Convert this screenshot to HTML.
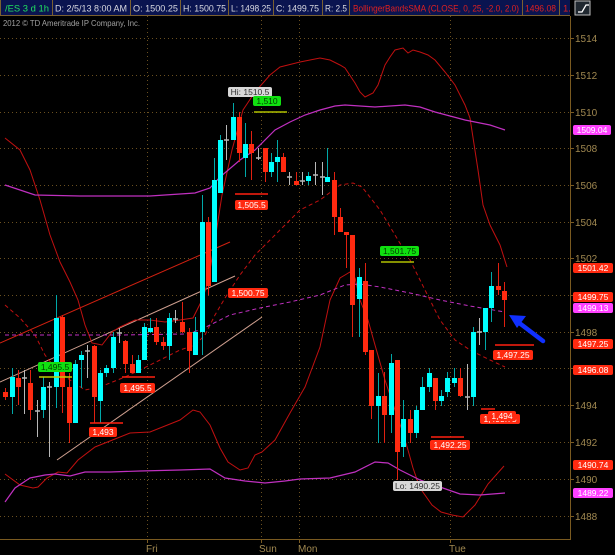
<!DOCTYPE html>
<html><head><meta charset="utf-8"><style>
html,body{margin:0;padding:0;background:#000;width:615px;height:555px;overflow:hidden}
svg{display:block}
text{font-family:"Liberation Sans",sans-serif}
</style></head><body>
<svg width="615" height="555" viewBox="0 0 615 555" xmlns="http://www.w3.org/2000/svg">
<rect width="615" height="555" fill="#000"/>
<!-- header -->
<rect x="0" y="0" width="570" height="16" fill="#0a1450"/>
<g stroke="#7a6030" stroke-width="1">
<line x1="0.5" y1="0" x2="0.5" y2="16"/>
<line x1="52.5" y1="0" x2="52.5" y2="16"/><line x1="130.5" y1="0" x2="130.5" y2="16"/>
<line x1="180.5" y1="0" x2="180.5" y2="16"/><line x1="228.5" y1="0" x2="228.5" y2="16"/>
<line x1="273.5" y1="0" x2="273.5" y2="16"/><line x1="322.5" y1="0" x2="322.5" y2="16"/>
<line x1="349.5" y1="0" x2="349.5" y2="16"/><line x1="522.5" y1="0" x2="522.5" y2="16"/><line x1="559.5" y1="0" x2="559.5" y2="16"/>
<line x1="0" y1="15.5" x2="570" y2="15.5"/>
</g>
<g font-size="9.5" fill="#d8d8e0">
<text x="5" y="11.5" fill="#20e060" textLength="44" lengthAdjust="spacingAndGlyphs">/ES 3 d 1h</text>
<text x="55" y="11.5" textLength="72" lengthAdjust="spacingAndGlyphs">D: 2/5/13 8:00 AM</text>
<text x="133" y="11.5" textLength="45" lengthAdjust="spacingAndGlyphs">O: 1500.25</text>
<text x="183" y="11.5" textLength="43" lengthAdjust="spacingAndGlyphs">H: 1500.75</text>
<text x="231" y="11.5" textLength="40" lengthAdjust="spacingAndGlyphs">L: 1498.25</text>
<text x="276" y="11.5" textLength="43" lengthAdjust="spacingAndGlyphs">C: 1499.75</text>
<text x="325" y="11.5" textLength="22" lengthAdjust="spacingAndGlyphs">R: 2.5</text>
<text x="353" y="11.5" fill="#e02020" textLength="166" lengthAdjust="spacingAndGlyphs">BollingerBandsSMA (CLOSE, 0, 25, -2.0, 2.0)</text>
<text x="525" y="11.5" fill="#e02020" textLength="31" lengthAdjust="spacingAndGlyphs">1496.08</text>
<text x="563" y="11.5" fill="#e02020">1.</text>
</g>
<rect x="575" y="1" width="15" height="14" fill="#202830" stroke="#c0c0c0"/>
<path d="M578 12 L582 12 L586 5 L589 5" stroke="#fff" stroke-width="1.3" fill="none"/>
<text x="3" y="26" font-size="8.5" fill="#a0a0a0" textLength="137" lengthAdjust="spacingAndGlyphs">2012 © TD Ameritrade IP Company, Inc.</text>
<!-- grid -->
<g stroke="#6a5020" stroke-width="1" stroke-dasharray="1,3">
<line x1="0" y1="38.5" x2="570" y2="38.5"/><line x1="0" y1="75.5" x2="570" y2="75.5"/>
<line x1="0" y1="112.5" x2="570" y2="112.5"/><line x1="0" y1="148.5" x2="570" y2="148.5"/>
<line x1="0" y1="185.5" x2="570" y2="185.5"/><line x1="0" y1="222.5" x2="570" y2="222.5"/>
<line x1="0" y1="258.5" x2="570" y2="258.5"/><line x1="0" y1="295.5" x2="570" y2="295.5"/>
<line x1="0" y1="332.5" x2="570" y2="332.5"/><line x1="0" y1="368.5" x2="570" y2="368.5"/>
<line x1="0" y1="405.5" x2="570" y2="405.5"/><line x1="0" y1="442.5" x2="570" y2="442.5"/>
<line x1="0" y1="479.5" x2="570" y2="479.5"/><line x1="0" y1="516.5" x2="570" y2="516.5"/>
<line x1="147.5" y1="16" x2="147.5" y2="539"/><line x1="261.5" y1="16" x2="261.5" y2="539"/>
<line x1="299.5" y1="16" x2="299.5" y2="539"/><line x1="450.5" y1="16" x2="450.5" y2="539"/>
</g>
<g stroke="#7a5a20"><line x1="570.5" y1="16" x2="570.5" y2="540"/><line x1="0" y1="539.5" x2="571" y2="539.5"/>
<line x1="147.5" y1="539" x2="147.5" y2="543"/><line x1="261.5" y1="539" x2="261.5" y2="543"/><line x1="299.5" y1="539" x2="299.5" y2="543"/><line x1="450.5" y1="539" x2="450.5" y2="543"/>
<path d="M570 38.5h4M570 75.5h4M570 112.5h4M570 148.5h4M570 185.5h4M570 222.5h4M570 258.5h4M570 295.5h4M570 332.5h4M570 368.5h4M570 405.5h4M570 442.5h4M570 479.5h4M570 516.5h4"/></g>
<g font-size="10" fill="#a08850">
<text x="575" y="42">1514</text><text x="575" y="79">1512</text><text x="575" y="116">1510</text>
<text x="575" y="152">1508</text><text x="575" y="189">1506</text><text x="575" y="226">1504</text>
<text x="575" y="262">1502</text><text x="575" y="299">1500</text><text x="575" y="336">1498</text>
<text x="575" y="372">1496</text><text x="575" y="409">1494</text><text x="575" y="446">1492</text>
<text x="575" y="483">1490</text><text x="575" y="520">1488</text>
<text x="146" y="552">Fri</text><text x="259" y="552">Sun</text><text x="298" y="552">Mon</text><text x="449" y="552">Tue</text>
</g>
<!-- trend lines -->
<line x1="0" y1="343" x2="230" y2="242" stroke="#d02010" stroke-width="1"/>
<line x1="0" y1="382" x2="235" y2="276" stroke="#d0a090" stroke-width="1"/>
<line x1="57" y1="460" x2="262" y2="317" stroke="#d0a090" stroke-width="1"/>
<!-- bands -->
<polyline fill="none" stroke="#c01010" stroke-width="1" points="5,138 20,150 30,170 40,200 50,235 60,262 70,282 78,300 85,325 92,343 102,345 112,332 120,327 135,320 150,320 165,322 180,320 193,318 202,300 208,282 215,240 222,195 232,150 243,110 255,92 270,75 280,67 300,62 320,58 330,60 340,65 345,68 355,83 360,92 365,97 373,93 378,85 385,65 390,57 395,50 403,48 408,53 413,50 420,52 428,55 435,60 445,72 455,85 465,105 470,118 478,170 483,205 490,225 500,245 507,267"/>
<polyline fill="none" stroke="#c01010" stroke-width="1" points="5,474 20,485 33,488 38,487 47,478 58,472 67,473 78,460 95,447 130,433 150,432 180,420 193,410 200,412 210,425 220,448 228,462 240,470 248,468 255,455 262,452 275,440 290,413 305,387 320,347 330,300 340,278 345,275 350,272 355,278 360,300 368,320 375,345 385,380 395,410 402,430 408,450 413,468 420,488 432,505 441,512 452,515 463,517 475,505 488,484 504,466"/>
<polyline fill="none" stroke="#c01010" stroke-width="1" stroke-dasharray="4,3" points="5,305 20,318 35,335 45,355 55,368 70,380 85,390 100,387 115,381 125,377 140,370 160,360 180,350 195,345 205,335 215,315 225,298 240,275 255,255 270,240 285,225 300,210 320,200 340,185 353,183 362,187 380,210 395,235 410,260 425,290 440,320 455,340 470,350 490,360 505,367"/>
<polyline fill="none" stroke="#c030c0" stroke-width="1.2" points="5,185 35,195 80,196 150,196 195,193 210,188 220,177 240,160 255,150 275,130 290,122 305,115 320,110 335,106 345,105 360,106 375,107 390,106 405,105 420,107 435,112 450,116 465,120 480,123 490,125 505,130"/>
<polyline fill="none" stroke="#c030c0" stroke-width="1.2" points="5,502 15,488 30,478 45,475 55,474 70,476 85,472 110,472 140,471 180,470 210,469 225,478 245,481 265,483 285,481 300,479 330,478 355,472 375,462 388,463 400,470 420,480 440,487 460,494 480,495 505,493"/>
<polyline fill="none" stroke="#c030c0" stroke-width="1" stroke-dasharray="4,3" points="5,335 40,335 120,335 185,334 200,330 230,315 260,308 290,302 320,295 345,285 360,284 380,287 410,293 440,300 470,306 505,312"/>
<!-- candles: wicks -->
<g stroke-width="1">
<g stroke="#00a8a8">
<path d="M12.5 368V414M43.5 377V418M56.5 295V408M75.5 360V423M81.5 351V388M100.5 370V423M106.5 365V377M113.5 332V373M138.5 355V373M144.5 323V360M150.5 318V333M169.5 313V360M195.5 317V355M202.5 195V355M214.5 158V282M220.5 135V193M233.5 103V140M245.5 123V177M271.5 153V177M277.5 140V182M308.5 172V185M327.5 148V182M359.5 268V337M378.5 373V443M391.5 354V433M403.5 400V457M416.5 406V438M422.5 377V410M429.5 368V392M441.5 390V406M447.5 372V397M454.5 368V387M473.5 327V406M485.5 308V350M491.5 272V322"/>
</g>
<g stroke="#e02010">
<path d="M5.5 388V400M18.5 370V405M30.5 370V420M62.5 315V413M69.5 373V443M94.5 345V423M125.5 340V373M132.5 355V373M156.5 318V345M163.5 337V350M182.5 302V333M189.5 328V373M208.5 217V295M239.5 112V162M251.5 131V180M265.5 148V182M283.5 153V172M296.5 172V185M334.5 172V235M340.5 208V232M346.5 232V268M352.5 235V337M365.5 263V355M371.5 350V419M384.5 372V443M397.5 360V480M410.5 410V443M435.5 378V410M460.5 368V397M498.5 263V295M504.5 282V327"/>
</g>
<g stroke="#b8b8b8">
<path d="M24.5 370V414M37.5 400V437M49.5 382V457M87.5 345V378M119.5 328V343M175.5 310V323M226.5 125V160M258.5 148V160M289.5 172V185M302.5 172V185M315.5 162V185M322.5 162V195M467.5 364V410M479.5 318V345"/>
<path d="M22 378h5M35 411h5M47 387h5M85 351h5M117 333h5M173 319h5M224 140h5M256 158h5M287 177h5M300 181h5M313 175h5M320 177h5M465 397h5M477 332h5" stroke-width="1.5"/>
</g>
</g>
<g fill="#00ffff">
<rect x="10" y="377" width="5" height="20"/><rect x="41" y="387" width="5" height="23"/><rect x="54" y="318" width="5" height="69"/>
<rect x="73" y="364" width="5" height="59"/><rect x="79" y="355" width="5" height="5"/><rect x="98" y="373" width="5" height="28"/>
<rect x="104" y="368" width="5" height="5"/><rect x="111" y="337" width="5" height="31"/><rect x="136" y="360" width="5" height="13"/>
<rect x="142" y="327" width="5" height="33"/><rect x="148" y="328" width="5" height="4"/><rect x="167" y="318" width="5" height="28"/>
<rect x="193" y="332" width="5" height="23"/><rect x="200" y="222" width="5" height="110"/><rect x="212" y="180" width="5" height="102"/>
<rect x="218" y="140" width="5" height="53"/><rect x="231" y="117" width="5" height="23"/><rect x="243" y="144" width="5" height="14"/>
<rect x="269" y="162" width="5" height="10"/><rect x="275" y="157" width="5" height="5"/><rect x="306" y="176" width="5" height="5"/>
<rect x="325" y="177" width="5" height="5"/><rect x="357" y="277" width="5" height="22"/><rect x="376" y="396" width="5" height="10"/>
<rect x="389" y="363" width="5" height="52"/><rect x="401" y="419" width="5" height="28"/><rect x="414" y="410" width="5" height="23"/>
<rect x="420" y="387" width="5" height="23"/><rect x="427" y="373" width="5" height="14"/><rect x="439" y="396" width="5" height="5"/>
<rect x="445" y="378" width="5" height="14"/><rect x="452" y="378" width="5" height="5"/><rect x="471" y="332" width="5" height="65"/>
<rect x="483" y="308" width="5" height="24"/><rect x="489" y="286" width="5" height="22"/>
</g>
<g fill="#ff2a10">
<rect x="3" y="392" width="5" height="5"/><rect x="16" y="378" width="5" height="9"/><rect x="28" y="383" width="5" height="27"/>
<rect x="60" y="317" width="5" height="70"/><rect x="67" y="387" width="5" height="36"/><rect x="92" y="346" width="5" height="51"/>
<rect x="123" y="341" width="5" height="23"/><rect x="130" y="364" width="5" height="9"/><rect x="154" y="327" width="5" height="15"/>
<rect x="161" y="342" width="5" height="4"/><rect x="180" y="322" width="5" height="10"/><rect x="187" y="332" width="5" height="19"/>
<rect x="206" y="222" width="5" height="64"/><rect x="237" y="117" width="5" height="36"/><rect x="249" y="144" width="5" height="9"/>
<rect x="263" y="148" width="5" height="24"/><rect x="281" y="157" width="5" height="15"/><rect x="294" y="181" width="5" height="4"/>
<rect x="332" y="180" width="5" height="37"/><rect x="338" y="217" width="5" height="15"/><rect x="344" y="232" width="5" height="3"/>
<rect x="350" y="235" width="5" height="70"/><rect x="363" y="281" width="5" height="71"/><rect x="369" y="350" width="5" height="56"/>
<rect x="382" y="396" width="5" height="19"/><rect x="395" y="360" width="5" height="92"/><rect x="408" y="419" width="5" height="14"/>
<rect x="433" y="378" width="5" height="23"/><rect x="458" y="378" width="5" height="18"/><rect x="496" y="286" width="5" height="4"/>
<rect x="502" y="291" width="5" height="9"/>
</g>
<!-- level lines -->
<g stroke-width="1.5">
<line x1="254" y1="112" x2="287" y2="112" stroke="#b0c000"/>
<line x1="39" y1="377" x2="72" y2="377" stroke="#c0d000"/>
<line x1="381" y1="262" x2="414" y2="262" stroke="#b0c000"/>
<line x1="235" y1="194" x2="268" y2="194" stroke="#ff2010"/>
<line x1="122" y1="377" x2="155" y2="377" stroke="#ff2010"/>
<line x1="90" y1="423" x2="123" y2="423" stroke="#ff2010"/>
<line x1="495" y1="345" x2="534" y2="345" stroke="#ff2010"/>
<line x1="431" y1="437" x2="464" y2="437" stroke="#ff2010"/>
<line x1="481" y1="409" x2="495" y2="409" stroke="#ff2010"/>
</g>
<!-- labels -->
<g font-size="8.5" text-anchor="middle">
<rect x="228" y="87" width="44" height="10" rx="2" fill="#d8d8d8"/><text x="250" y="95" fill="#303030">Hi: 1510.5</text>
<rect x="253" y="96" width="28" height="10" rx="2" fill="#10e010"/><text x="267" y="104" fill="#004000">1,510</text>
<rect x="235" y="200" width="33" height="10" rx="2" fill="#ff2a10"/><text x="251.5" y="208" fill="#fff">1,505.5</text>
<rect x="228" y="288" width="40" height="10" rx="2" fill="#ff2a10"/><text x="248" y="296" fill="#fff">1,500.75</text>
<rect x="38" y="362" width="34" height="10" rx="2" fill="#10e010"/><text x="55" y="370" fill="#004000">1,495.5</text>
<rect x="120" y="383" width="35" height="10" rx="2" fill="#ff2a10"/><text x="137.5" y="391" fill="#fff">1,495.5</text>
<rect x="89" y="427" width="28" height="10" rx="2" fill="#ff2a10"/><text x="103" y="435" fill="#fff">1,493</text>
<rect x="380" y="246" width="39" height="10" rx="2" fill="#10e010"/><text x="399.5" y="254" fill="#004000">1,501.75</text>
<rect x="493" y="350" width="40" height="10" rx="2" fill="#ff2a10"/><text x="513" y="358" fill="#fff">1,497.25</text>
<rect x="480" y="414" width="40" height="10" rx="2" fill="#ff2a10"/><text x="500" y="422" fill="#fff">1,493.75</text>
<rect x="488" y="411" width="28" height="10" rx="2" fill="#ff2a10"/><text x="502" y="419" fill="#fff">1,494</text>
<rect x="430" y="440" width="40" height="10" rx="2" fill="#ff2a10"/><text x="450" y="448" fill="#fff">1,492.25</text>
<rect x="393" y="481" width="49" height="10" rx="2" fill="#d8d8d8"/><text x="417.5" y="489" fill="#303030">Lo: 1490.25</text>
</g>
<g font-size="8.5" text-anchor="middle">
<rect x="573" y="125" width="38" height="10" rx="2" fill="#ff40ff"/><text x="592" y="133" fill="#fff">1509.04</text>
<rect x="573" y="263" width="40" height="10" rx="2" fill="#ff2a10"/><text x="593" y="271" fill="#fff">1501.42</text>
<rect x="573" y="292" width="40" height="10" rx="2" fill="#ff2a10"/><text x="593" y="300" fill="#fff">1499.75</text>
<rect x="573" y="303" width="40" height="10" rx="2" fill="#ff40ff"/><text x="593" y="311" fill="#fff">1499.13</text>
<rect x="573" y="339" width="40" height="10" rx="2" fill="#ff2a10"/><text x="593" y="347" fill="#fff">1497.25</text>
<rect x="573" y="365" width="40" height="10" rx="2" fill="#ff2a10"/><text x="593" y="373" fill="#fff">1496.08</text>
<rect x="573" y="460" width="40" height="10" rx="2" fill="#ff2a10"/><text x="593" y="468" fill="#fff">1490.74</text>
<rect x="573" y="488" width="40" height="10" rx="2" fill="#ff40ff"/><text x="593" y="496" fill="#fff">1489.22</text>
</g>
<!-- blue arrow -->
<line x1="543" y1="341" x2="518" y2="322" stroke="#1030ff" stroke-width="4.5" stroke-linecap="round"/>
<polygon points="509,315 526,316 517,328" fill="#1030ff"/>
</svg>
</body></html>
